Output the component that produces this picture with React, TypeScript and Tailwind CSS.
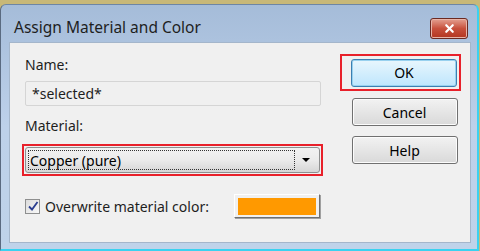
import { X } from 'lucide-react';

const font = { fontFamily: '"Noto Sans", "Open Sans", sans-serif' };

const DialogButton = ({ label, focused }: { label: string; focused?: boolean }) => (
  <button
    className={`h-[28px] w-[106px] rounded-[3px] border text-[14px] text-black ${
      focused
        ? 'border-[#3c7fb1] bg-gradient-to-b from-[#e8f6fd] to-[#bee6fd] shadow-[inset_0_0_0_1px_#98d1ef]'
        : 'border-[#707070] bg-gradient-to-b from-[#f2f2f2] to-[#d9d9d9] shadow-[inset_0_0_0_1px_#fcfcfc]'
    }`}
  >
    {label}
  </button>
);

export default function App() {
  return (
    <div className="h-[251px] w-[480px] overflow-hidden bg-[#c8b878]" style={font}>
      <div className="mt-[4px] h-[247px] w-[479px] rounded-t-[6px] border-b-2 border-r-2 border-l border-t border-[#3ad2f0] border-l-[#5a6a80] border-t-[#6e86a4] bg-gradient-to-b from-[#a5bcd9] via-[#bdd1ea] to-[#bfd3ea] pl-[8px] pr-[6px]">
        <div className="flex h-[37px] items-center justify-between">
          <span className="pl-[5px] pt-[8px] text-[15.5px] text-[#1e1e1e]">Assign Material and Color</span>
          <div className="mt-[9px] mr-[3px] flex h-[21px] w-[38px] items-center justify-center rounded-[3px] border border-[#6b2a22] bg-gradient-to-b from-[#e3a091] via-[#c7503c] to-[#b3351f] shadow-[inset_0_0_0_1px_#e8b4a8]">
            <X className="h-[13px] w-[13px] text-white" strokeWidth={4} />
          </div>
        </div>
        <div className="flex h-[201px] border border-[#a4b6cb] bg-[#f0f0f0] pl-[15px] pr-[9px]">
          <div className="flex w-[296px] flex-col pt-[12px]">
            <div className="text-[14px] leading-[20px] text-[#1e1e1e]">Name:</div>
            <div className="mt-[6px] flex h-[25px] items-center rounded-[2px] border border-[#d5d5d5] bg-[#f0f0f0] pl-[6px] text-[14px] text-[#1e1e1e]">
              *selected*
            </div>
            <div className="mt-[10px] text-[14px] leading-[20px] text-[#1e1e1e]">Material:</div>
            <div className="-ml-[3px] mt-[8px] w-[301px] border-2 border-[#e8202a] p-[1px]">
              <div className="flex h-[26px] items-center rounded-[3px] border border-[#8e8f8f] bg-gradient-to-b from-[#f2f2f2] via-[#ebebeb] to-[#d6d6d6] p-[2px]">
                <div className="flex h-full flex-1 items-center border border-dotted border-[#333] pl-[1px] text-[14px] text-black">
                  Copper (pure)
                </div>
                <div className="flex w-[22px] justify-center">
                  <div className="h-0 w-0 border-x-[4px] border-t-[4px] border-x-transparent border-t-black" />
                </div>
              </div>
            </div>
            <div className="mt-[18px] flex items-center">
              <div className="flex h-[15px] w-[15px] items-center justify-center border border-[#8e8f8f] bg-gradient-to-br from-[#dcdcdc] to-[#f8f8f8]">
                <svg viewBox="0 0 12 12" className="h-[12px] w-[12px]">
                  <path d="M2 6.5 L5 9.5 L10.5 2" fill="none" stroke="#2a3d8f" strokeWidth="1.8" />
                </svg>
              </div>
              <span className="ml-[5px] text-[14px] text-[#1e1e1e]">Overwrite material color:</span>
              <div className="ml-auto mr-[1px] flex h-[24px] w-[86px] items-center justify-center border border-[#fff] border-b-[#707070] border-r-[#707070] shadow-[1px_1px_0_#a0a0a0]">
                <div className="h-[17px] w-[78px] bg-[#ff9900]" />
              </div>
            </div>
          </div>
          <div className="ml-auto flex flex-col items-center pt-[11px]">
            <div className="flex h-[37px] w-[121px] items-center justify-center border-2 border-[#e8202a] pl-[7px]">
              <DialogButton label="OK" focused />
            </div>
            <div className="mt-[7px] pl-[8px]">
              <DialogButton label="Cancel" />
            </div>
            <div className="mt-[10px] pl-[8px]">
              <DialogButton label="Help" />
            </div>
          </div>
        </div>
      </div>
    </div>
  );
}
